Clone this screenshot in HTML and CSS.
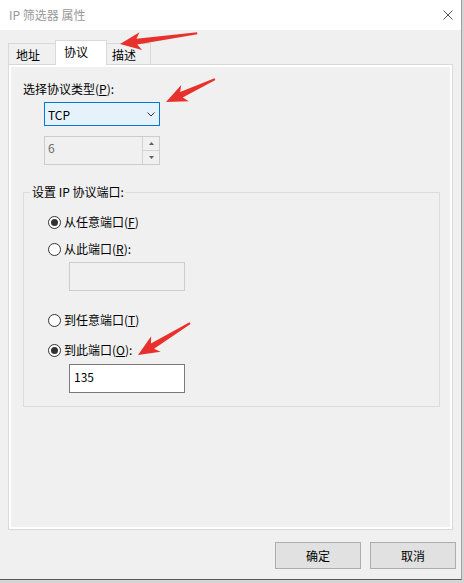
FILE: index.html
```html
<!DOCTYPE html>
<html lang="zh-CN">
<head>
  <meta charset="UTF-8">
  <title>IP 筛选器 属性</title>
  <link rel="stylesheet" href="styles.css">
</head>
<body>
  <div class="dialog">
    <div class="titlebar">
      <span class="title">IP 筛选器 属性</span>
      <svg class="close" width="10" height="10" viewBox="0 0 10 10">
        <path d="M0.5 0.5L9.5 9.5M9.5 0.5L0.5 9.5" stroke="#555" stroke-width="1" fill="none"/>
      </svg>
    </div>

    <div class="main">
      <div class="tabs">
        <div class="tab tab-addr">地址</div>
        <div class="tab active">协议</div>
        <div class="tab tab-desc">描述</div>
      </div>

      <div class="page">
        <div class="field-label">选择协议类型(<u>P</u>):</div>
        <div class="combo">
          <span>TCP</span>
          <svg width="8" height="5" viewBox="0 0 8 5">
            <path d="M0.5 0.5L4 4L7.5 0.5" stroke="#333" stroke-width="1" fill="none"/>
          </svg>
        </div>
        <div class="spin">
          <span class="spin-value">6</span>
          <div class="spin-btns">
            <span class="spin-up">
              <svg width="5" height="3" viewBox="0 0 5 3"><path d="M0 3L2.5 0L5 3Z" fill="#606060"/></svg>
            </span>
            <span class="spin-down">
              <svg width="5" height="3" viewBox="0 0 5 3"><path d="M0 0L2.5 3L5 0Z" fill="#606060"/></svg>
            </span>
          </div>
        </div>

        <fieldset class="group">
          <legend>设置 IP 协议端口:</legend>
          <div class="radio checked"><span class="circle"></span><span>从任意端口(<u>F</u>)</span></div>
          <div class="radio r2"><span class="circle"></span><span>从此端口(<u>R</u>):</span></div>
          <div class="textbox"></div>
          <div class="radio r3"><span class="circle"></span><span>到任意端口(<u>T</u>)</span></div>
          <div class="radio checked r4"><span class="circle"></span><span>到此端口(<u>O</u>):</span></div>
          <div class="textbox enabled">135</div>
        </fieldset>
      </div>
    </div>

    <div class="buttons">
      <button class="btn">确定</button>
      <button class="btn">取消</button>
    </div>
  </div>

  <!-- red annotation arrows -->
  <svg class="marks" width="464" height="583" viewBox="0 0 464 583">
    <g fill="#e8302c">
      <polygon transform="translate(120 44) rotate(-8)" points="0,0 21,-9 17,-3 78,-1 78,1 17,3 21,9"/>
      <polygon transform="translate(166 102) rotate(-25)" points="0,0 21,-9 17,-3 54,-1 54,1 17,3 21,9"/>
      <polygon transform="translate(138 355) rotate(-31.5)" points="0,0 21,-9 17,-3 61,-1 61,1 17,3 21,9"/>
    </g>
  </svg>
</body>
</html>
```

FILE: styles.css
```css
body {
  margin: 0;
  width: 464px;
  height: 583px;
  overflow: hidden;
  position: relative;
  background: #d4d4d4;
  font-family: "Noto Sans CJK SC", "Noto Sans", sans-serif;
  font-size: 12px;
  color: #000;
}

.dialog {
  width: 462px;
  height: 580px;
  box-sizing: border-box;
  background: #f0f0f0;
  border-right: 1px solid #a0a0a0;
  border-bottom: 1px solid #5a5a5a;
}

.titlebar {
  height: 30px;
  background: #fff;
  display: flex;
  align-items: center;
  justify-content: space-between;
  padding: 0 8px 0 9px;
}

.title {
  color: #999;
  line-height: 16px;
}

.main {
  padding: 10px 8px 0 8px;
}

/* tabs */
.tabs {
  display: flex;
  align-items: flex-end;
  height: 24px;
}

.tab {
  box-sizing: border-box;
  height: 21px;
  padding-left: 7px;
  border: 1px solid #d9d9d9;
  border-bottom: none;
  background: #f0f0f0;
  line-height: 21px;
}

.tab-addr {
  width: 49px;
}

.tab-desc {
  width: 47px;
}

.tab.active {
  width: 52px;
  height: 25px;
  margin: 0 -3px -1px -2px;
  padding-left: 8px;
  background: #fff;
  line-height: 21px;
  position: relative;
  z-index: 1;
}

.page {
  height: 466px;
  box-sizing: border-box;
  border: 1px solid #d9d9d9;
  box-shadow: inset 0 0 0 2px #fff;
  padding: 16px 12px 0 14px;
}

.field-label {
  line-height: 16px;
}

.combo {
  margin: 5px 0 0 21px;
  width: 116px;
  height: 24px;
  box-sizing: border-box;
  border: 1px solid #0078d7;
  background: #e5f1fb;
  display: flex;
  align-items: center;
  justify-content: space-between;
  padding: 0 4px 0 3px;
}

.spin {
  margin: 10px 0 0 21px;
  width: 116px;
  height: 29px;
  box-sizing: border-box;
  border: 1px solid #ccc;
  background: #f0f0f0;
  display: flex;
  justify-content: space-between;
}

.spin-value {
  color: #6d6d6d;
  padding: 3px 0 0 3px;
  line-height: 16px;
}

.spin-btns {
  width: 16px;
  display: flex;
  flex-direction: column;
  border-left: 1px solid #d4d4d4;
}

.spin-btns span {
  flex: 1;
  display: flex;
  align-items: center;
  justify-content: center;
}

.spin-up {
  border-bottom: 1px solid #d4d4d4;
}

/* port group */
.group {
  margin: 19px 0 0;
  min-width: 0;
  border: 1px solid #dcdcdc;
  padding: 14px 0 13px 24px;
}

.group legend {
  padding: 0 2px;
  margin-left: -18px;
  line-height: 16px;
}

.radio {
  display: flex;
  align-items: center;
  gap: 3px;
  height: 16px;
  line-height: 16px;
}

.radio.r2 {
  margin-top: 11px;
}

.radio.r3 {
  margin-top: 21px;
}

.radio.r4 {
  margin-top: 14px;
}

.circle {
  width: 13px;
  height: 13px;
  box-sizing: border-box;
  border: 1px solid #333;
  border-radius: 50%;
  background: #fff;
  display: flex;
  align-items: center;
  justify-content: center;
}

.radio.checked .circle::after {
  content: "";
  width: 7px;
  height: 7px;
  border-radius: 50%;
  background: #333;
}

.textbox {
  margin: 5px 0 0 21px;
  width: 116px;
  height: 29px;
  box-sizing: border-box;
  border: 1px solid #ccc;
  background: #f0f0f0;
  padding: 4px;
  line-height: 16px;
}

.textbox.enabled {
  margin-top: 6px;
  background: #fff;
  border-color: #7a7a7a;
}

/* dialog buttons */
.buttons {
  display: flex;
  justify-content: flex-end;
  gap: 9px;
  padding: 12px 5px 0 0;
}

.btn {
  width: 86px;
  height: 27px;
  box-sizing: border-box;
  border: 1px solid #adadad;
  background: #e1e1e1;
  font: inherit;
  color: #000;
  padding: 0;
}

.marks {
  position: absolute;
  left: 0;
  top: 0;
  pointer-events: none;
}
```
